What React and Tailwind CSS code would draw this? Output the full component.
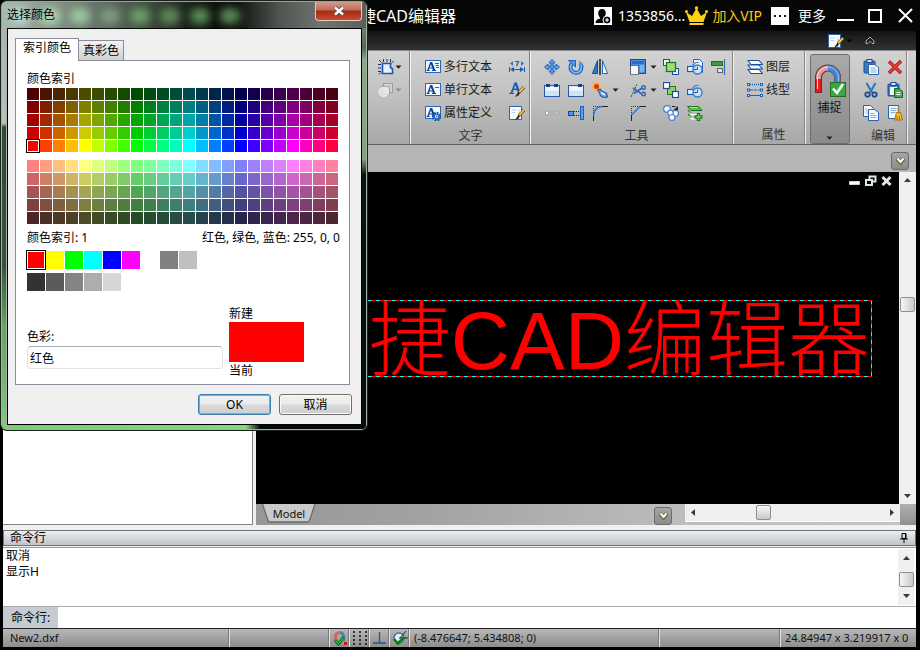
import React from "react";

const FONT = "font-['Noto_Sans','Noto_Sans_CJK_SC',sans-serif]";

/* ---------- icons ---------- */

function Svg({ children, w = 16, h = 16, box, className = "" }) {
  return (
    <svg
      width={w}
      height={h}
      viewBox={box || `0 0 ${w} ${h}`}
      fill="none"
      aria-hidden="true"
      className={`shrink-0 ${className}`}
    >
      {children}
    </svg>
  );
}

const Caret = ({ color = "#222" }) => (
  <Svg w={7} h={4}>
    <path d="M0.5 0.5h6L3.5 3.8z" fill={color} />
  </Svg>
);

const SelectIcon = () => (
  <Svg>
    <path d="M4.500 4.500h8v4l2 1.500v4.500h-10z" fill="#e8f2fc" stroke="#1458b4" strokeWidth="1.600" />
    <path d="M1 1l2.500 2.500M5.500 0v3M9 0v3M12.500 0v3M15.500 2l-2.500 2.500M0 5.500h3M0 9h3M0 12.500h3M1 15.500l2-2" stroke="#1b3560" />
  </Svg>
);
const GreyIcon = () => (
  <Svg>
    <rect x="5.500" y="1.500" width="9" height="9" fill="#d2d2d2" stroke="#9c9c9c" />
    <path d="M3.500 4.500h8v8h-8z" fill="#dcdcdc" stroke="#a6a6a6" />
    <circle cx="5.500" cy="10" r="4.500" fill="#e6e6e6" fillOpacity=".8" stroke="#f6f6f6" />
  </Svg>
);

const ABox = ({ children }) => (
  <>
    <rect x="0.500" y="1.500" width="15" height="12" fill="#f5faff" stroke="#2b66b5" />
    <path d="M5.200 3h2l3 8h.8v1H7v-1h.9l-.5-1.500H4.300L3.800 11h.9v1H1.500v-1h.8zM4.700 8.400H7L5.900 5.200z" fill="#0d4595" />
    {children}
  </>
);
const MTextIcon = () => (
  <Svg><ABox><path d="M10 4.500h4M10.500 6.500h3.500M11 8.500h3" stroke="#2b66b5" /></ABox></Svg>
);
const TextIcon = () => (
  <Svg><ABox><path d="M10 5.500h4" stroke="#2b66b5" /></ABox></Svg>
);
const Gear = () => (
  <>
    <circle cx="11.500" cy="11.500" r="3.500" stroke="#1b559f" strokeWidth="2.600" strokeDasharray="1.700 1" />
    <circle cx="11.500" cy="11.500" r="2.400" fill="#d7e8f9" stroke="#2465b4" strokeWidth="1.300" />
    <circle cx="11.500" cy="11.500" r=".8" fill="#1b559f" />
  </>
);
const AttrIcon = () => (<Svg><ABox><Gear /></ABox></Svg>);
const DimIcon = () => (
  <Svg>
    <path d="M0.500 8v5M15.500 8v5M2 10.500h12" stroke="#145fb8" />
    <path d="M1 10.500L5 8v5zM15 10.500L11 8v5z" fill="#145fb8" />
    <path d="M4 2L1 4.500 4 7zM12 2l3 2.500L12 7z" fill="#2d7bd0" />
    <path d="M6 2.500h3.500L7.500 7" stroke="#145fb8" strokeWidth="1.200" />
  </Svg>
);
const Brush = () => (
  <>
    <path d="M15 5L10 10.500" stroke="#6b4a10" strokeWidth="3" />
    <path d="M15 5L10 10.500" stroke="#f8d24a" strokeWidth="1.800" />
    <path d="M9.500 9.500L11 11l-1.500 2.500L6 15z" fill="#2a2a2a" />
  </>
);
const ABrushIcon = () => (
  <Svg>
    <path d="M5.500 0.500h2.300L11.500 11h-2.500l-1-3H4.500l-1 3H5v1H0v-1h1.500zM5 6.500h2.500L6.200 3z" fill="#1b5cae" />
    <Brush />
  </Svg>
);
const NoteBrushIcon = () => (
  <Svg>
    <path d="M0.500 1.500h12v13h-12z" fill="#fbfdff" stroke="#2b62ad" />
    <path d="M10 14V4M2.500 5h5M2.500 7.500h4" stroke="#bcd3ee" />
    <Brush />
  </Svg>
);
const MoveIcon = () => (
  <Svg>
    <path d="M8 0.500l3 3.500H9v3h3V5l3.500 3-3.500 3V9H9v3h2l-3 3.500L5 12h2V9H4v2L0.500 8 4 5v2h3V4H5z" fill="#5aa8f5" stroke="#1656ae" strokeWidth=".9" />
  </Svg>
);
const RotateIcon = () => (
  <Svg>
    <path d="M3.500 5A5.500 5.500 0 1 0 12 4.500" stroke="#1656ae" strokeWidth="4" />
    <path d="M3.500 5A5.500 5.500 0 1 0 12 4.500" stroke="#74baf8" strokeWidth="2" />
    <path d="M0.500 1.500h7V8z" fill="#4a9bee" stroke="#1656ae" strokeWidth=".9" />
    <path d="M11 1.500l4 4-4 1z" fill="#4a9bee" />
  </Svg>
);
const MirrorIcon = () => (
  <Svg>
    <path d="M5.500 1.500v13h-5z" fill="#2f78c8" stroke="#174b91" />
    <path d="M10.500 1.500v13h5z" fill="#f4faff" stroke="#2469bd" />
    <path d="M8 0v16" stroke="#222" strokeWidth="1.500" />
  </Svg>
);
const ScaleIcon = () => (
  <Svg>
    <rect x="0.500" y="0.500" width="15" height="14" fill="#4a90e0" stroke="#174b91" />
    <path d="M2 2h12v3H2z" fill="#2b6cc0" />
    <path d="M10 6h4v7h-4z" fill="#78b2f0" />
    <rect x="0.500" y="6.500" width="8" height="9" fill="#f4f8fc" stroke="#222" strokeDasharray="1 1" />
  </Svg>
);
const FrontIcon = () => (
  <Svg>
    <rect x="0.500" y="0.500" width="6" height="6" fill="#f4f9ff" stroke="#174e9e" />
    <rect x="9.500" y="9.500" width="6" height="6" fill="#f4f9ff" stroke="#174e9e" />
    <rect x="3.500" y="3.500" width="9" height="9" fill="#a3da7c" stroke="#1c7c20" strokeWidth="1.300" />
  </Svg>
);
const BackIcon = () => (
  <Svg>
    <rect x="4.500" y="4.500" width="8" height="8" fill="#8fcf6c" stroke="#1c7c20" />
    <rect x="0.500" y="0.500" width="6" height="6" fill="#fff" stroke="#174e9e" strokeWidth="1.200" />
    <rect x="9.500" y="9.500" width="6" height="6" fill="#fff" stroke="#174e9e" strokeWidth="1.200" />
  </Svg>
);
const ShapesIcon = ({ page }) => (
  <Svg>
    {page && <path d="M6.500 4V0.500h6l3 3V14" fill="#f3f8fe" stroke="#2564b4" />}
    <path d="M5.500 6.500L8.500 3.500h3" stroke="#2f7fd8" strokeWidth="1.200" />
    <rect x="0.500" y="7.500" width="8" height="5" fill="#eaf3fd" stroke="#1c5fb3" strokeWidth="1.200" />
    <circle cx="10.500" cy="10.500" r="4.500" fill="#d3e6fa" fillOpacity=".85" stroke="#2f7fd8" strokeWidth="1.400" />
    <path d="M10.500 7.500v3h-4" stroke="#1c5fb3" />
  </Svg>
);
const AlignIcon = () => (
  <Svg>
    <rect x="0.500" y="2.500" width="11" height="4" fill="#35a23a" stroke="#1b7220" />
    <rect x="6.500" y="9.500" width="5" height="4" fill="#e2e2e2" stroke="#666" />
    <path d="M13.500 0v16" stroke="#2a70c7" strokeWidth="1.200" />
  </Svg>
);
const BreakIcon = ({ one }) => (
  <Svg>
    <rect x="0.500" y="3.500" width="15" height="11" fill="#cfe3fb" stroke="#2a5ca8" />
    <path d="M1.500 4.500h13v4h-13z" fill="#f2f8ff" />
    {!one && <path d="M2 2h4v3H2z" fill="#12428c" />}
    <path d="M10 2h4v3h-4z" fill="#12428c" />
  </Svg>
);
const ExplodeIcon = () => (
  <Svg>
    <circle cx="4.500" cy="4.500" r="4.500" fill="#fbb24e" />
    <circle cx="4.500" cy="4.500" r="2.500" fill="#cf3c14" />
    <path d="M5.500 8l3-1 1 2 5 2 1 4-3 1-4-2-1-3z" fill="#5aa0e6" stroke="#174b91" />
    <path d="M9 10.500l4 2.500" stroke="#e3f1ff" strokeWidth="1.500" />
  </Svg>
);
const TrimIcon = () => (
  <Svg>
    <path d="M1 15L7 2" stroke="#444" strokeDasharray="2 1" />
    <path d="M3 6l8 5.500M4 11.500L12 6" stroke="#2a67b5" strokeWidth="1.600" />
    <circle cx="13.500" cy="5.500" r="1.800" stroke="#2a67b5" strokeWidth="1.400" />
    <circle cx="13.500" cy="12" r="1.800" stroke="#2a67b5" strokeWidth="1.400" />
  </Svg>
);
const JoinIcon = () => (
  <Svg>
    <rect x="1.500" y="6.500" width="3" height="3" fill="#fff" stroke="#aaa" />
    <path d="M6 7.500h4M6 9.500h4" stroke="#aaa" strokeDasharray="1 1" />
    <rect x="11.500" y="6.500" width="3" height="3" fill="#ccc" stroke="#aaa" />
  </Svg>
);
const StretchIcon = () => (
  <Svg>
    <rect x="0.500" y="6.500" width="5" height="4" fill="#4a98ee" stroke="#174b91" />
    <path d="M6 6.500h6M6 10.500h6" stroke="#222" strokeDasharray="1 1" />
    <rect x="12.500" y="1.500" width="3" height="13" fill="#55a2f2" stroke="#1d5fb4" />
  </Svg>
);
const FilletIcon = () => (
  <Svg>
    <path d="M1.500 12V1.500H9" stroke="#333" strokeDasharray="1 1" />
    <path d="M1.500 10v6M9 1.500h7" stroke="#222" />
    <path d="M1.500 11Q2 2 10 1.500" stroke="#2a7be0" strokeWidth="1.400" />
  </Svg>
);
const ChamferIcon = () => (
  <Svg>
    <path d="M1.500 10V1.500H9" stroke="#333" strokeDasharray="1 1" />
    <path d="M1.500 10v6M9 1.500h7" stroke="#222" />
    <path d="M1.500 10L10 1.500" stroke="#2a7be0" strokeWidth="1.600" />
  </Svg>
);
const CirclesIcon = () => (
  <Svg>
    <g fill="#f1f6fe" stroke="#4c80cc" strokeWidth="1.200">
      <circle cx="4" cy="4" r="3.400" />
      <circle cx="12.500" cy="8.500" r="3" />
      <circle cx="7.500" cy="8" r="2.800" />
      <circle cx="9" cy="12.500" r="3" />
    </g>
    <path d="M9 1.500h3.500" stroke="#222" />
    <path d="M15 1v4.500L10.500 5z" fill="#222" />
  </Svg>
);
const GreenStackIcon = () => (
  <Svg>
    <path d="M1 5l3 4h9M1 9l3 4h5" stroke="#197321" strokeWidth="1.200" />
    <path d="M1.500 6l2 2.500h10v2H4zM1.500 10l2 2.500h6v2H4z" fill="#fafffa" />
    <path d="M0.500 1.500h11l3.500 4H4z" fill="#5cc04e" stroke="#197321" />
    <path d="M2.500 2.500h8.500" stroke="#a5e295" />
    <path d="M11.500 8v8M7.500 12h8" stroke="#176d1e" strokeWidth="3.400" />
    <path d="M11.500 9v6M8.500 12h6" stroke="#5fd05a" strokeWidth="1.400" />
  </Svg>
);
const LayersIcon = () => (
  <Svg>
    <g fill="#fbfdff" stroke="#17519f" strokeWidth="1.100">
      <path d="M1 10.500h11l3.500 4H4z" />
      <path d="M1 6h11l3.500 4H4z" />
      <path d="M1 1.500h11l3.500 4H4z" />
    </g>
  </Svg>
);
const LinetypeIcon = () => (
  <Svg>
    <path d="M3 2.500h10" stroke="#1b5fb7" strokeDasharray="1 1" strokeWidth="1.500" />
    <path d="M3 8h10" stroke="#1b5fb7" strokeDasharray="3 1" />
    <path d="M3 13.500h10" stroke="#1b5fb7" />
    <path d="M0 1h3v3H0zM13 1h3v3h-3zM0 6.500h3v3H0zM13 6.500h3v3h-3zM0 12h3v3H0zM13 12h3v3h-3z" fill="#1b5fb7" />
    <path d="M1 2h1v1H1zM14 2h1v1h-1zM1 7.500h1v1H1zM14 7.500h1v1h-1zM1 13h1v1H1zM14 13h1v1h-1z" fill="#fff" />
  </Svg>
);
const MagnetIcon = () => (
  <Svg w={32} h={34}>
    <path d="M4.500 29V13.500a9.500 9.500 0 0 1 19 0v4" stroke="#7d2323" strokeWidth="7" />
    <path d="M4.500 28V13.500" stroke="#e51b1b" strokeWidth="5" />
    <path d="M4.500 15v-1.500A9.500 9.500 0 0 1 14 4" stroke="#d89a9a" strokeWidth="5" />
    <path d="M14 4a9.500 9.500 0 0 1 9.500 9.500v4" stroke="#3d85d2" strokeWidth="6" />
    <path d="M3.500 25V13.500A10.500 10.500 0 0 1 14 3" stroke="#ffd5d5" />
    <path d="M14 3a10.500 10.500 0 0 1 10.500 10.500v4" stroke="#9cc8f4" />
    <rect x="16.500" y="18.500" width="15" height="14" fill="#39a83e" stroke="#207026" />
    <path d="M19 24.500l4 4.500 6-9" stroke="#fff" strokeWidth="2.600" />
  </Svg>
);
const Clip = () => (
  <>
    <rect x="1" y="2" width="11" height="12" rx="1" fill="#3b79c5" stroke="#1c4a8d" />
    <rect x="4" y="0.500" width="5" height="3" fill="#dbe6f3" stroke="#1c4a8d" />
  </>
);
const PasteIcon = () => (
  <Svg>
    <Clip />
    <path d="M5.500 5.500h6l4 3v7h-10z" fill="#f7fbff" stroke="#2b62ad" />
    <path d="M7.500 9h5M7.500 11h6M7.500 13h6" stroke="#88a9d4" />
  </Svg>
);
const PasteGreenIcon = () => (
  <Svg>
    <Clip />
    <path d="M3 5h7v8H3z" fill="#eef5fd" />
    <path d="M7.500 6.500h5l3 3v6h-8z" fill="#49a94a" stroke="#15671b" />
    <path d="M9.500 10.500h4M9.500 12.500h4" stroke="#fff" />
  </Svg>
);
const DeleteIcon = () => (
  <Svg>
    <path d="M2 2.500L14 14M14 2L2 14" stroke="#a31414" strokeWidth="3.200" />
    <path d="M2.500 3L13.500 13.500M13.500 2.500L2.500 13.500" stroke="#ea3a33" strokeWidth="1.800" />
  </Svg>
);
const CutIcon = () => (
  <Svg>
    <path d="M3.500 1l5.500 9.500M12.500 1L7 10.500" stroke="#2e76c4" strokeWidth="2.200" />
    <circle cx="4.500" cy="12.500" r="2.200" stroke="#174b91" strokeWidth="1.800" />
    <circle cx="11.500" cy="12.500" r="2.200" stroke="#174b91" strokeWidth="1.800" />
  </Svg>
);
const CopyIcon = () => (
  <Svg>
    <g fill="#f5faff" stroke="#2b62ad">
      <path d="M0.500 0.500h7l3 3v8h-10z" />
      <path d="M5.500 4.500h6l4 3v8h-10z" />
    </g>
    <path d="M2.500 4h2M2.500 6h2M2.500 8h2M7.500 8.500h4M7.500 10.500h6M7.500 12.500h6" stroke="#88a9d4" />
  </Svg>
);
const CleanIcon = () => (
  <Svg>
    <path d="M1.500 0.500h10v13h-10z" fill="#f5faff" stroke="#2b62ad" />
    <path d="M3.500 3.500h6M3.500 5.500h6M3.500 7.500h5" stroke="#88a9d4" />
    <path d="M11.500 2v6" stroke="#c58a17" strokeWidth="2" />
    <path d="M9.500 7.500h4l2 7.500h-8z" fill="#f4bb2a" stroke="#a87312" />
    <path d="M10 11v4M12.500 11v4" stroke="#a87312" />
  </Svg>
);
const DownChevron = () => (
  <Svg w={9} h={8}>
    <path d="M1 1.500L4.500 5.500 8 1.500" stroke="#66662e" strokeWidth="4" />
    <path d="M1.500 1.500L4.500 5 7.500 1.500" stroke="#fff" strokeWidth="2" />
  </Svg>
);

/* ---------- palette ---------- */

function cellColor(hueIndex, level, pale) {
  const h = (hueIndex * 15) / 60;
  const sector = Math.floor(h);
  const f = h - sector;
  const rgb = [
    [1, f, 0],
    [1 - f, 1, 0],
    [0, 1, f],
    [0, 1 - f, 1],
    [f, 0, 1],
    [1, 0, 1 - f],
  ][sector];
  return `rgb(${rgb.map((v) => Math.round(level * (pale ? 0.5 + v / 2 : v))).join(",")})`;
}

function Palette({ levels, pale, selectedRow }) {
  return (
    <div className="grid w-max grid-cols-[repeat(24,12px)] gap-px">
      {levels.map((level, r) =>
        Array.from({ length: 24 }, (_, c) => (
          <button
            key={`${r}-${c}`}
            type="button"
            aria-label={cellColor(c, level, pale)}
            className={`h-3 w-3 ${
              selectedRow === r && c === 0 ? "border border-white outline outline-black" : ""
            }`}
            style={{ backgroundColor: cellColor(c, level, pale) }}
          />
        ))
      )}
    </div>
  );
}

function Swatch({ color, selected }) {
  return (
    <button
      type="button"
      aria-label={color}
      className={`size-[18px] ${selected ? "border border-white outline outline-black" : ""}`}
      style={{ backgroundColor: color }}
    />
  );
}

const GLOWS = [
  "bg-[#c3e6df]",
  "bg-[#bfe6c4]",
  "bg-[#a5dca8]",
  "bg-[#86a988]",
  "bg-[#76b273]",
  "bg-[#68a068]",
  "bg-[#6bab68]",
  "bg-[#6bab68]",
];

function ColorDialog() {
  return (
    <section
      role="dialog"
      aria-label="选择颜色"
      className="absolute left-0 top-0 z-10 flex w-[368px] flex-col overflow-hidden rounded-[7px] border border-[#1b241c] bg-[#222]"
    >
      <header className="relative flex h-[27px] items-center justify-between border-x border-t border-[#9aa39b] bg-[linear-gradient(90deg,#a9b9ae_0%,#8b9a8c_12%,#65726a_26%,#3a463a_42%,#131713_54%,#0c0e0c_64%,#4f5450_76%,#6f7570_88%,#59625a_100%)] pl-[5px]">
        <span className="absolute left-2 top-1.5 flex gap-2.5" aria-hidden="true">
          {GLOWS.map((g, i) => (
            <i key={i} className={`block h-4 w-5 rounded-full opacity-80 blur-[4px] ${g}`} />
          ))}
        </span>
        <h2 className="relative text-[12px] leading-4 text-black">选择颜色</h2>
        <button
          type="button"
          aria-label="关闭"
          className="relative mr-1 flex h-[19px] w-[47px] items-center justify-center self-start rounded-b-[4px] border border-t-0 border-[#e6c9c2] bg-[linear-gradient(180deg,#d39a8e_0%,#c06a58_45%,#a52a14_50%,#c24d30_100%)]"
        >
          <Svg w={12} h={10}>
            <path d="M2 1.500l8 7M10 1.500l-8 7" stroke="#4a4a55" strokeWidth="4" />
            <path d="M2 1.500l8 7M10 1.500l-8 7" stroke="#fff" strokeWidth="2.400" />
          </Svg>
        </button>
      </header>

      <div className="flex">
        <div className="w-[6px] shrink-0 border-l border-[#a5b8a5] bg-[linear-gradient(180deg,#a9b3ab_0%,#b8c2ba_24%,#2f4a30_25%,#35553a_60%,#63a45f_75%,#80c77a_100%)]" />
        <div className="min-w-0 flex-1 border border-black bg-[#f0f0f0] px-[7px] pb-[9px] pt-[9px] outline outline-[#a9b0a9]">
          <div role="tablist" className="flex items-end">
            <button
              role="tab"
              aria-selected="true"
              type="button"
              className="relative z-10 -mb-px h-[23px] w-16 border border-b-0 border-[#8b8c9b] bg-white pb-1 text-[12px] leading-4"
            >
              索引颜色
            </button>
            <button
              role="tab"
              aria-selected="false"
              type="button"
              className="h-5 w-[45px] border border-b-0 border-l-0 border-[#8b8c9b] bg-gradient-to-b from-[#f2f2f2] to-[#d0d0d0] text-[12px] leading-4"
            >
              真彩色
            </button>
          </div>

          <div className="mr-1 h-[325px] border border-[#8b8c9b] bg-white pl-[11px] pr-[9px] pt-2.5">
            <p className="h-[17px] text-[12px] leading-4">颜色索引</p>
            <Palette levels={[76, 127, 165, 204, 255]} selectedRow={4} />
            <div className="h-2" />
            <Palette levels={[255, 204, 165, 127, 76]} pale />
            <div className="flex h-[27px] items-center justify-between text-[12px] leading-4">
              <span>颜色索引: 1</span>
              <span>红色, 绿色, 蓝色: 255, 0, 0</span>
            </div>
            <div className="flex gap-px">
              <Swatch color="#ff0000" selected />
              <Swatch color="#ffff00" />
              <Swatch color="#00ff00" />
              <Swatch color="#00ffff" />
              <Swatch color="#0000ff" />
              <Swatch color="#ff00ff" />
              <span className="w-[18px]" />
              <Swatch color="#808080" />
              <Swatch color="#c0c0c0" />
            </div>
            <div className="mt-1 flex gap-px">
              <Swatch color="#333333" />
              <Swatch color="#5b5b5b" />
              <Swatch color="#848484" />
              <Swatch color="#adadad" />
              <Swatch color="#d6d6d6" />
            </div>
            <div className="mt-[15px] flex gap-1.5">
              <div className="flex w-[196px] flex-col pt-[22px]">
                <label htmlFor="color-name" className="text-[12px] leading-[18px]">
                  色彩:
                </label>
                <input
                  id="color-name"
                  defaultValue="红色"
                  className="h-[23px] w-full rounded-sm border border-[#dde3ea] border-t-[#abadb3] px-[2px] text-[12px] leading-4 outline-none"
                />
              </div>
              <div className="text-[12px] leading-4">
                <p>新建</p>
                <div className="mb-px h-10 w-[75px] bg-[#ff0000]" />
                <p>当前</p>
              </div>
            </div>
          </div>

          <div className="mr-0.5 mt-[9px] flex justify-end gap-2">
            <button
              type="button"
              className="h-[21px] w-[73px] rounded-[3px] border border-[#3c7fb1] bg-[linear-gradient(180deg,#f2f2f2_0%,#ebebeb_48%,#dadada_52%,#cecece_100%)] text-[12px] leading-4 shadow-[inset_0_0_0_1px_#55b8ee]"
            >
              OK
            </button>
            <button
              type="button"
              className="h-[21px] w-[73px] rounded-[3px] border border-[#707070] bg-[linear-gradient(180deg,#f2f2f2_0%,#ebebeb_48%,#dadada_52%,#cecece_100%)] text-[12px] leading-4 shadow-[inset_0_0_0_1px_#fafafa]"
            >
              取消
            </button>
          </div>
        </div>
        <div className="w-[5px] shrink-0 border-r border-[#a5b0a7] bg-[linear-gradient(180deg,#6f7a70_0%,#5b655c_5%,#86ab87_8%,#7da57d_33%,#0d120e_37%,#0a0d0a_100%)]" />
      </div>
      <div className="h-[5px] rounded-b-[5px] border-x border-b border-[#a5b0a7] bg-[linear-gradient(90deg,#7fc979_0%,#8bd385_67%,#050805_71%,#050805_100%)]" />
    </section>
  );
}

/* ---------- ribbon ---------- */

function Tool({ label, children }) {
  return (
    <button type="button" aria-label={label} className="flex h-[23px] items-center justify-center">
      {children}
    </button>
  );
}

function Group({ title, className, children }) {
  return (
    <section
      className={`flex h-full shrink-0 flex-col border-r border-[#f0f0f0] pt-1 shadow-[inset_-1px_0_0_#858585] ${className}`}
    >
      <div className="h-[69px]">{children}</div>
      {title && (
        <h3 className="pt-[3px] text-center text-[12px] leading-[18px] text-[#333]">{title}</h3>
      )}
    </section>
  );
}

function LabelTool({ icon, text }) {
  return (
    <button type="button" className="flex h-[23px] items-center gap-[3px] text-[12px] leading-4 text-[#1a1a1a]">
      {icon}
      <span className="whitespace-nowrap">{text}</span>
    </button>
  );
}

function Ribbon() {
  return (
    <div className="flex h-[95px] justify-end overflow-hidden border-b border-t border-b-[#606060] border-t-[#8a8a8a] bg-[linear-gradient(180deg,#d2d2d2_0%,#c4c4c4_40%,#a8a8a8_100%)] pr-2">
      <Group className="w-[34px]">
        <div className="grid w-[25px] grid-cols-[18px_7px] items-center">
          <Tool label="选择"><SelectIcon /></Tool>
          <Caret />
          <Tool label="选择图形"><GreyIcon /></Tool>
          <Caret color="#8a8a8a" />
        </div>
      </Group>
      <Group title="文字" className="w-[120px]">
        <div className="flex justify-between pl-3.5 pr-[5px]">
          <div className="flex flex-col">
            <LabelTool icon={<MTextIcon />} text="多行文本" />
            <LabelTool icon={<TextIcon />} text="单行文本" />
            <LabelTool icon={<AttrIcon />} text="属性定义" />
          </div>
          <div className="flex flex-col">
            <Tool label="标注"><DimIcon /></Tool>
            <Tool label="文字样式"><ABrushIcon /></Tool>
            <Tool label="编辑文字"><NoteBrushIcon /></Tool>
          </div>
        </div>
      </Group>
      <Group title="工具" className="w-[203px] pl-[9px]">
        <div className="grid grid-cols-[24px_24px_24px_14px_24px_9px_24px_24px_24px] items-center">
          <Tool label="移动"><MoveIcon /></Tool>
          <Tool label="旋转"><RotateIcon /></Tool>
          <Tool label="镜像"><MirrorIcon /></Tool>
          <span />
          <Tool label="缩放"><ScaleIcon /></Tool>
          <Caret />
          <Tool label="前置"><FrontIcon /></Tool>
          <Tool label="复制图形"><ShapesIcon page /></Tool>
          <Tool label="对齐"><AlignIcon /></Tool>

          <Tool label="打断"><BreakIcon /></Tool>
          <Tool label="打断于点"><BreakIcon one /></Tool>
          <Tool label="分解"><ExplodeIcon /></Tool>
          <Caret />
          <Tool label="修剪"><TrimIcon /></Tool>
          <Caret />
          <Tool label="后置"><BackIcon /></Tool>
          <Tool label="图形"><ShapesIcon /></Tool>
          <span />

          <Tool label="合并"><JoinIcon /></Tool>
          <Tool label="延伸"><StretchIcon /></Tool>
          <Tool label="圆角"><FilletIcon /></Tool>
          <span />
          <Tool label="倒角"><ChamferIcon /></Tool>
          <span />
          <Tool label="阵列"><CirclesIcon /></Tool>
          <Tool label="添加图层"><GreenStackIcon /></Tool>
          <span />
        </div>
      </Group>
      <Group title="属性" className="w-[72px] pl-2">
        <div className="flex flex-col pl-[5px]">
          <LabelTool icon={<LayersIcon />} text="图层" />
          <LabelTool icon={<LinetypeIcon />} text="线型" />
        </div>
      </Group>
      <div className="flex w-[47px] shrink-0 justify-center px-[3px] pt-[3px]">
        <button
          type="button"
          className="flex h-[90px] w-10 shrink-0 flex-col items-center rounded-[3px] border border-[#6e6e6e] bg-gradient-to-b from-[#a9a9a9] to-[#8b8b8b] pt-[9px] text-[12px] leading-4 text-[#111]"
        >
          <MagnetIcon />
          <span className="mt-0.5">捕捉</span>
          <span className="mt-5"><Caret /></span>
        </button>
      </div>
      <Group title="编辑" className="w-[55px] pl-[6px]">
        <div className="grid grid-cols-[24px_24px]">
          <Tool label="粘贴"><PasteIcon /></Tool>
          <Tool label="删除"><DeleteIcon /></Tool>
          <Tool label="剪切"><CutIcon /></Tool>
          <Tool label="选择性粘贴"><PasteGreenIcon /></Tool>
          <Tool label="复制"><CopyIcon /></Tool>
          <Tool label="清理"><CleanIcon /></Tool>
        </div>
      </Group>
    </div>
  );
}

/* ---------- window chrome ---------- */

function TitleBar() {
  return (
    <header className="flex h-[31px] shrink-0 items-center justify-between bg-[#060606] pl-[357px] pr-[7px] text-white">
      <h1 className="whitespace-nowrap text-[16px] leading-5">捷CAD编辑器</h1>
      <div className="flex items-center text-[14px] leading-5">
        <button type="button" className="flex items-center gap-1.5">
          <Svg w={18} h={18}>
            <rect width="18" height="18" fill="#fff" />
            <path d="M8 2c2.500 0 3.800 1.800 3.800 4S10.500 10 10 10.500V12H6v-1.500C5 9.500 4.200 8 4.200 6S5.500 2 8 2z" fill="#050505" />
            <path d="M1.500 16c.3-3 2-4 5-4.500h4l1 4.500z" fill="#050505" />
            <circle cx="13" cy="13" r="4" fill="#050505" stroke="#fff" />
            <path d="M13 11v4M11 13h4" stroke="#fff" strokeWidth="1.200" />
          </Svg>
          <span>1353856...</span>
        </button>
        <button type="button" className="flex items-center gap-1 text-[#ffc90e]">
          <Svg w={23} h={20}>
            <path d="M1 6l6 4 4.500-8L16 10l6-4-3.500 10h-14z" fill="#ffd012" />
            <path d="M4.500 18h14" stroke="#ffd012" strokeWidth="2" />
            <circle cx="1.500" cy="5.500" r="1.500" fill="#ffd012" />
            <circle cx="11.500" cy="2" r="1.700" fill="#ffd012" />
            <circle cx="21.500" cy="5.500" r="1.500" fill="#ffd012" />
          </Svg>
          <span>加入VIP</span>
        </button>
        <button type="button" className="ml-[9px] flex items-center gap-[9px]">
          <Svg w={18} h={18}>
            <rect width="18" height="18" fill="#fff" />
            <path d="M3 8h2v2H3zM8 8h2v2H8zM13 8h2v2h-2z" fill="#111" />
          </Svg>
          <span>更多</span>
        </button>
        <button type="button" aria-label="最小化" className="ml-[11px]">
          <Svg w={17} h={16}><path d="M0 12h17" stroke="#fff" strokeWidth="2" /></Svg>
        </button>
        <button type="button" aria-label="最大化" className="ml-3.5">
          <Svg w={14} h={14}><rect x="1" y="1" width="12" height="12" stroke="#fff" strokeWidth="2" /></Svg>
        </button>
        <button type="button" aria-label="关闭窗口" className="ml-4">
          <Svg w={15} h={15}><path d="M1 1l13 13M14 1L1 14" stroke="#fff" strokeWidth="2" /></Svg>
        </button>
      </div>
    </header>
  );
}

function QuickBar() {
  return (
    <div className="flex h-[19px] shrink-0 items-center justify-end bg-[linear-gradient(180deg,#111314,#303234)] pr-[41px]">
      <button type="button" aria-label="样式" className="flex items-center gap-0.5">
        <NoteBrushIcon />
        <Caret color="#050505" />
      </button>
      <button type="button" aria-label="折叠功能区" className="ml-3">
        <Svg w={10} h={9}>
          <path d="M1 5l4-4 4 4v2.500H7L5 5.500 3 7.500H1z" stroke="#aaa" />
        </Svg>
      </button>
    </div>
  );
}

const Arrow = ({ dir }) => {
  const d = {
    up: "M0 5l3.500-4L7 5z",
    down: "M0 2l3.500 4L7 2z",
    left: "M5 0L1 3.500 5 7z",
    right: "M2 0l4 3.500L2 7z",
  }[dir];
  return (
    <Svg w={7} h={7}>
      <path d={d} fill="#3a3a3a" />
    </Svg>
  );
};

function MdiButtons() {
  return (
    <div className="flex h-[17px] items-center justify-end gap-1 pr-[6px]">
      <button type="button" aria-label="最小化图纸">
        <Svg w={12} h={12}><path d="M0.500 6.500h10v3h-10z" fill="#fff" stroke="#ccd4d8" /></Svg>
      </button>
      <button type="button" aria-label="还原图纸">
        <Svg w={12} h={12}>
          <path d="M4.500 4V1.500h6v5H8" stroke="#dfe6ea" strokeWidth="2" />
          <rect x="1" y="5" width="6" height="5" stroke="#dfe6ea" strokeWidth="2" />
        </Svg>
      </button>
      <button type="button" aria-label="关闭图纸">
        <Svg w={12} h={12}><path d="M1.500 2l8 8M9.500 2l-8 8" stroke="#dfe6ea" strokeWidth="3" /></Svg>
      </button>
    </div>
  );
}

function Workspace() {
  return (
    <div className="flex min-h-0 flex-1 bg-[#f0f0f0]">
      <aside className="w-[250px] shrink-0 border-b border-r border-[#7f858c] bg-white" />
      <div className="ml-[3px] flex min-w-0 flex-1 flex-col">
        <div className="flex min-h-0 flex-1">
          <main className="relative min-w-0 flex-1 overflow-hidden bg-black">
            <MdiButtons />
            {/* drawing entity with its selection frame */}
            <div className="absolute left-[112px] top-[128px] h-[77px] w-[504px] bg-[linear-gradient(90deg,#00ffff_50%,#ff0000_50%),linear-gradient(90deg,#00ffff_50%,#ff0000_50%),linear-gradient(180deg,#00ffff_50%,#ff0000_50%)] bg-[size:8px_1px,8px_1px,1px_8px] bg-[position:left_top,left_bottom,right_top] pr-0.5 [background-repeat:repeat-x,repeat-x,repeat-y]">
              <p className="whitespace-nowrap text-right font-['Liberation_Sans','Noto_Sans_CJK_SC',sans-serif] text-[82px] font-light leading-[81px] text-[#ff0000]">
                捷CAD编辑器
              </p>
            </div>
          </main>
          <div className="flex w-[17px] shrink-0 flex-col items-center justify-between bg-[#f0f0f0] py-[5px]">
            <Arrow dir="up" />
            <div className="mb-[68px] h-[15px] w-[15px] rounded-[2px] border border-[#8e8e8e] bg-gradient-to-r from-[#f7f7f7] to-[#c9c9c9]" />
            <Arrow dir="down" />
          </div>
        </div>
        <div className="flex h-[21px] shrink-0 bg-[linear-gradient(90deg,#979797_0%,#a2a2a2_25%,#bdbdbd_65%,#c4c4c4_100%)]">
          <button
            type="button"
            className="relative ml-1.5 h-[19px] w-[54px] text-[11px] leading-4 text-[#111]"
          >
            <Svg w={54} h={19} className="absolute inset-0">
              <path d="M0.500 0L6 16.500q.5 1.500 2 1.500h37.500q1.500 0 2-1.500L53 0" fill="#c9c9c9" stroke="#6c6c6c" strokeWidth="1.300" />
            </Svg>
            <span className="relative">Model</span>
          </button>
          <div className="flex flex-1 items-end justify-end pr-[13px]">
            <button
              type="button"
              aria-label="显示布局"
              className="flex h-[18px] w-[18px] items-center justify-center rounded-[3px] border border-[#6b6b6b] bg-gradient-to-b from-[#a5a5a5] to-[#8c8c8c]"
            >
              <DownChevron />
            </button>
          </div>
          <div className="flex h-[18px] w-[215px] items-center justify-between border-b border-white bg-[#efefef] px-[5px]">
            <Arrow dir="left" />
            <div className="mr-[58px] h-[15px] w-[15px] rounded-[2px] border border-[#8e8e8e] bg-gradient-to-b from-[#f7f7f7] to-[#c9c9c9]" />
            <Arrow dir="right" />
          </div>
          <div className="w-4 bg-gradient-to-b from-[#b0b0b0] to-[#8f8f8f]" />
        </div>
      </div>
    </div>
  );
}

function CommandPanel() {
  return (
    <section className="shrink-0 bg-[#f0f0f0] pt-[5px]">
      <header className="flex h-4 items-center justify-between border border-[#6f7276] bg-gradient-to-b from-[#eceef0] to-[#bfc3c8] pl-1.5 pr-[7px]">
        <h2 className="text-[12px] leading-[14px]">命令行</h2>
        <button type="button" aria-label="固定">
          <Svg w={8} h={11}>
            <path d="M2 0.500h4v5H2zM0 6h8M4 6v4" stroke="#000" />
            <path d="M5.500 1v5" stroke="#000" />
          </Svg>
        </button>
      </header>
      <div className="mt-px flex h-[59px] border-t border-[#9a9a9a] bg-white">
        <div role="log" className="flex-1 pl-[3px] text-[12px] leading-4">
          <p>取消</p>
          <p>显示H</p>
        </div>
        <div className="my-px mr-0.5 flex w-4 flex-col items-center justify-between bg-[#f0f0f0] py-1.5">
          <Arrow dir="up" />
          <div className="mt-1 h-[15px] w-[15px] rounded-[2px] border border-[#8e8e8e] bg-gradient-to-r from-[#f7f7f7] to-[#c9c9c9]" />
          <Arrow dir="down" />
        </div>
      </div>
      <div className="flex h-[22px] border-t border-[#a5adb5] bg-white">
        <label
          htmlFor="command"
          className="flex w-[55px] items-center bg-[#c6cbd2] pl-2 text-[12px] leading-4"
        >
          命令行:
        </label>
        <input id="command" className="min-w-0 flex-1 px-1 text-[12px] outline-none" />
      </div>
    </section>
  );
}

function StatusCell({ className = "", children }) {
  return (
    <div
      className={`flex items-center border-r border-[#e2e2e2] shadow-[inset_-1px_0_0_#7b7b7b] ${className}`}
    >
      {children}
    </div>
  );
}

function StatusBar() {
  return (
    <footer className="flex h-[19px] shrink-0 border-t border-[#222] bg-gradient-to-b from-[#b8b8b8] to-[#8d8d8d] text-[11px] leading-4 text-[#111]">
      <StatusCell className="w-[227px] pl-[7px]">New2.dxf</StatusCell>
      <StatusCell className="w-[100px]" />
      <StatusCell className="w-5 justify-center">
        <button type="button" aria-label="捕捉">
          <Svg>
            <path d="M3.500 12V6.500a4 4 0 0 1 4-4" stroke="#cf6a62" strokeWidth="3" />
            <path d="M7.500 2.500a4 4 0 0 1 4 4V11" stroke="#4b86b8" strokeWidth="3" />
            <path d="M3 10l3.500 4L12 7" stroke="#0c7c16" strokeWidth="3" />
            <path d="M3.500 10.500l3 3L11.500 8" stroke="#45d34a" />
            <path d="M12 12h3v3h-3z" fill="#d80f0f" />
          </Svg>
        </button>
      </StatusCell>
      <StatusCell className="w-5 justify-center">
        <button type="button" aria-label="栅格">
          <Svg>
            <path d="M1 2h15M1 6h15M1 10h15M1 14h15" stroke="#333" strokeWidth="2" strokeDasharray="2 4" />
          </Svg>
        </button>
      </StatusCell>
      <StatusCell className="w-5 justify-center">
        <button type="button" aria-label="正交">
          <Svg><path d="M7.500 2v11M1 13h13" stroke="#1d5795" strokeWidth="1.300" /></Svg>
        </button>
      </StatusCell>
      <StatusCell className="w-5 justify-center">
        <button type="button" aria-label="对象捕捉">
          <Svg>
            <circle cx="7" cy="8" r="5" fill="#e7f2fb" stroke="#3479b8" strokeWidth="1.500" />
            <path d="M7 8h9M8 8l6-7" stroke="#222" />
            <path d="M2 9l4 4.500L12 7" stroke="#0c7c16" strokeWidth="2.600" />
          </Svg>
        </button>
      </StatusCell>
      <StatusCell className="min-w-0 flex-1 whitespace-nowrap pl-1">(-8.476647; 5.434808; 0)</StatusCell>
      <StatusCell className="w-[121px]" />
      <div className="flex w-[135px] items-center whitespace-nowrap pl-1">24.84947 x 3.219917 x 0</div>
    </footer>
  );
}

export default function App() {
  return (
    <div
      className={`relative flex h-screen min-h-[600px] flex-col overflow-hidden bg-black pb-[3px] pl-[3px] pr-1 text-black ${FONT}`}
    >
      <div className="-mr-1 flex flex-col">
        <TitleBar />
      </div>
      <QuickBar />
      <Ribbon />
      <div className="flex h-[27px] shrink-0 items-center justify-end bg-[#b5b5b5] pr-[7px] pt-[7px] pb-[3px]">
        <button
          type="button"
          aria-label="展开"
          className="flex h-[18px] w-[18px] items-center justify-center rounded-[3px] border border-[#6b6b6b] bg-gradient-to-b from-[#a5a5a5] to-[#8c8c8c]"
        >
          <DownChevron />
        </button>
      </div>
      <Workspace />
      <CommandPanel />
      <StatusBar />
      <ColorDialog />
    </div>
  );
}
